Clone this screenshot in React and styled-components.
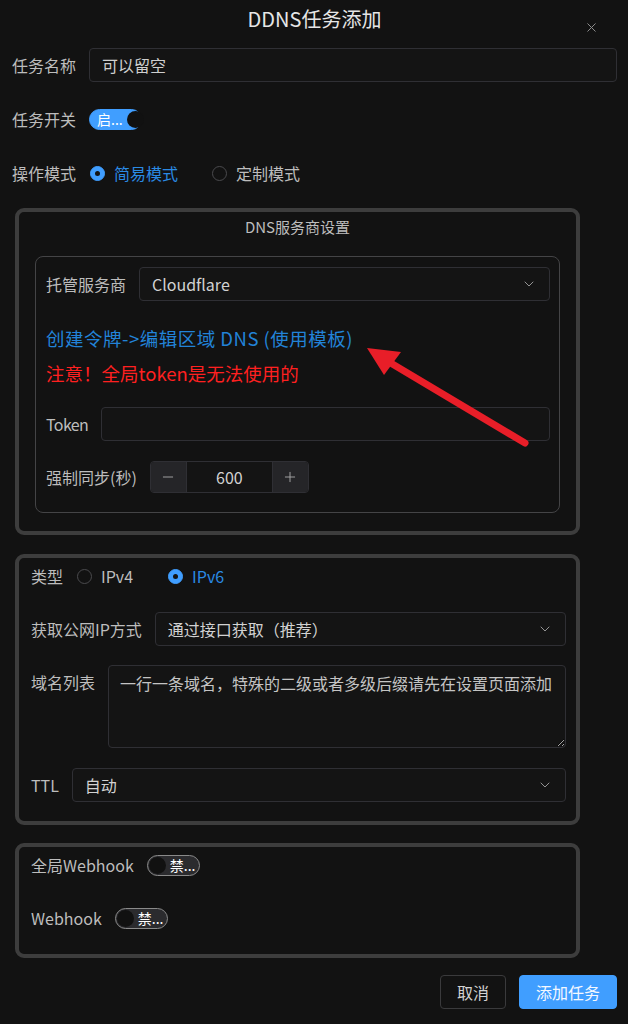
import React from 'react';
import styled, { createGlobalStyle } from 'styled-components';
import { X, ChevronDown, Minus, Plus } from 'lucide-react';

const colors = {
    bg: '#121212',
    field: '#141414',
    fieldBorder: '#2f2f34',
    box: '#3d3d3d',
    innerBox: '#444446',
    label: '#bdbdbd',
    text: '#d2d2d2',
    title: '#e6e6e6',
    primary: '#409eff',
    link: '#2283d8',
    danger: '#ff2020',
};

const GlobalStyle = createGlobalStyle`
    * { box-sizing: border-box; }
    html, body {
        margin: 0;
        background: ${colors.bg};
    }
    body {
        font-family: "Noto Sans CJK SC", "Noto Sans", sans-serif;
        color: ${colors.text};
    }
`;

const App = () => {
    return (
        <Dialog>
            <GlobalStyle />
            <Header>
                <Title>DDNS任务添加</Title>
                <CloseButton><X size={15} strokeWidth={1.6} /></CloseButton>
            </Header>

            <Row $mt={10}>
                <Label>任务名称</Label>
                <TextInput placeholder="可以留空" />
            </Row>
            <Row $mt={20}>
                <Label>任务开关</Label>
                <Switch on text="启..." />
            </Row>
            <Row $mt={20}>
                <Label>操作模式</Label>
                <RadioGroup $gap={33}>
                    <Radio checked label="简易模式" />
                    <Radio label="定制模式" />
                </RadioGroup>
            </Row>

            <Section $mt={18} $pad="0 16px 18px">
                <SectionTitle>DNS服务商设置</SectionTitle>
                <InnerBox>
                    <Row $mt={0}>
                        <Label>托管服务商</Label>
                        <Select value="Cloudflare" />
                    </Row>
                    <LinkText>创建令牌-&gt;编辑区域 DNS (使用模板)</LinkText>
                    <WarnText>注意！全局token是无法使用的</WarnText>
                    <Row $mt={21}>
                        <Label $narrow>Token</Label>
                        <TextInput />
                    </Row>
                    <Row $mt={20} $h={32}>
                        <Label>强制同步(秒)</Label>
                        <NumberBox>
                            <StepButton><Minus size={16} strokeWidth={1.4} /></StepButton>
                            <NumberValue>600</NumberValue>
                            <StepButton><Plus size={16} strokeWidth={1.4} /></StepButton>
                        </NumberBox>
                    </Row>
                </InnerBox>
            </Section>

            <Section $mt={19} $pad="6px 10px 19px 12px">
                <Row $mt={0} $h={24}>
                    <Label>类型</Label>
                    <RadioGroup $gap={34}>
                        <Radio label="IPv4" />
                        <Radio checked label="IPv6" />
                    </RadioGroup>
                </Row>
                <Row $mt={24}>
                    <Label>获取公网IP方式</Label>
                    <Select value="通过接口获取（推荐）" />
                </Row>
                <Row $mt={19} $top $h={83}>
                    <Label $lh={34}>域名列表</Label>
                    <TextArea placeholder="一行一条域名，特殊的二级或者多级后缀请先在设置页面添加" />
                </Row>
                <Row $mt={20}>
                    <Label>TTL</Label>
                    <Select value="自动" />
                </Row>
            </Section>

            <Section $mt={18} $pad="7px 10px 25px 12px">
                <Row $mt={0} $h={22}>
                    <Label>全局Webhook</Label>
                    <Switch text="禁..." />
                </Row>
                <Row $mt={31} $h={22}>
                    <Label>Webhook</Label>
                    <Switch text="禁..." />
                </Row>
            </Section>

            <Footer>
                <Button>取消</Button>
                <Button $primary>添加任务</Button>
            </Footer>

            <Arrow width="175" height="110" viewBox="0 0 175 110">
                <line x1="165" y1="103" x2="24" y2="19" stroke="#e81e28" strokeWidth="7" strokeLinecap="round" />
                <polygon points="7,8 41,12 24,35" fill="#e81e28" />
            </Arrow>
        </Dialog>
    );
};

const Switch = ({ on, text }) => (
    <Track $on={on}>
        {on && <SwitchText>{text}</SwitchText>}
        <Knob $on={on} />
        {!on && <SwitchText>{text}</SwitchText>}
    </Track>
);

const Radio = ({ checked, label }) => (
    <RadioItem $checked={checked}>
        <RadioDot $checked={checked} />
        <span>{label}</span>
    </RadioItem>
);

const Select = ({ value }) => (
    <SelectBox>
        <span>{value}</span>
        <ChevronDown size={16} strokeWidth={1.3} color="#a8a8a8" />
    </SelectBox>
);

export default App;

const Dialog = styled.div`
    position: relative;
    width: 628px;
    height: 1024px;
    padding: 0 11px 0 12px;
    overflow: hidden;
`;

const Header = styled.div`
    height: 38px;
    display: flex;
    align-items: center;
    justify-content: center;
`;

const Title = styled.div`
    font-size: 20px;
    line-height: 38px;
    color: ${colors.title};
`;

const CloseButton = styled.div`
    position: absolute;
    top: 20px;
    right: 29px;
    color: #8c8c8c;
    display: flex;
`;

const Row = styled.div`
    display: flex;
    align-items: ${p => p.$top ? 'flex-start' : 'center'};
    gap: 13px;
    margin-top: ${p => p.$mt}px;
    height: ${p => p.$h || 34}px;
`;

const Label = styled.div`
    font-size: 16px;
    line-height: ${p => p.$lh || 22}px;
    color: ${colors.label};
    white-space: nowrap;
    letter-spacing: ${p => p.$narrow ? '-0.6px' : '0'};
`;

const TextInput = styled.input`
    flex: 1;
    min-width: 0;
    height: 34px;
    background: ${colors.field};
    border: 1px solid ${colors.fieldBorder};
    border-radius: 4px;
    padding: 0 12px;
    font-family: inherit;
    font-size: 16px;
    color: ${colors.text};
    outline: none;

    &::placeholder {
        color: #cfcfcf;
    }
`;

const TextArea = styled.textarea`
    flex: 1;
    height: 83px;
    background: ${colors.field};
    border: 1px solid ${colors.fieldBorder};
    border-radius: 4px;
    padding: 5px 11px;
    font-family: inherit;
    font-size: 16px;
    line-height: 24px;
    color: ${colors.text};
    outline: none;
    resize: vertical;

    &::placeholder {
        color: #c4c4c4;
    }
`;

const SelectBox = styled.div`
    flex: 1;
    height: 34px;
    display: flex;
    align-items: center;
    justify-content: space-between;
    background: ${colors.field};
    border: 1px solid ${colors.fieldBorder};
    border-radius: 4px;
    padding: 0 12px 0 12px;
    font-size: 16px;
    color: ${colors.text};
`;

const Track = styled.div`
    width: 53px;
    height: 21px;
    border-radius: 11px;
    display: flex;
    align-items: center;
    padding: 0 1px 0 ${p => p.$on ? 7 : 1}px;
    gap: 4px;
    background: ${p => p.$on ? colors.primary : '#2b2b2e'};
    border: 1px solid ${p => p.$on ? colors.primary : '#8a8a8a'};
    justify-content: ${p => p.$on ? 'space-between' : 'flex-start'};
`;

const Knob = styled.div`
    width: 17px;
    height: 17px;
    border-radius: 50%;
    background: #111;
    flex: none;
`;

const SwitchText = styled.span`
    font-size: 14px;
    line-height: 19px;
    color: #fff;
    white-space: nowrap;
`;

const RadioGroup = styled.div`
    display: flex;
    align-items: center;
    gap: ${p => p.$gap}px;
`;

const RadioItem = styled.div`
    display: flex;
    align-items: center;
    gap: 9px;
    font-size: 16px;
    line-height: 22px;
    color: ${p => p.$checked ? '#2a8ae4' : colors.label};
`;

const RadioDot = styled.div`
    width: 15px;
    height: 15px;
    border-radius: 50%;
    margin-left: 1px;
    border: 1px solid ${p => p.$checked ? colors.primary : '#4a4a4d'};
    background: ${p => p.$checked ? colors.primary : 'transparent'};
    display: flex;
    align-items: center;
    justify-content: center;

    &::after {
        content: '';
        width: 5px;
        height: 5px;
        border-radius: 50%;
        background: ${p => p.$checked ? '#141414' : 'transparent'};
    }
`;

const Section = styled.div`
    width: 565px;
    margin: ${p => p.$mt}px 0 0 3px;
    border: 4px solid ${colors.box};
    border-radius: 9px;
    padding: ${p => p.$pad};
`;

const SectionTitle = styled.div`
    text-align: center;
    font-size: 15px;
    line-height: 30px;
    color: ${colors.label};
`;

const InnerBox = styled.div`
    margin-top: 14px;
    border: 1px solid ${colors.innerBox};
    border-radius: 8px;
    padding: 10px 9px 19px 10px;
`;

const LinkText = styled.div`
    margin-top: 24px;
    font-size: 18.5px;
    line-height: 26px;
    letter-spacing: 0.5px;
    color: ${colors.link};
`;

const WarnText = styled.div`
    margin-top: 9px;
    font-size: 18.5px;
    line-height: 26px;
    color: ${colors.danger};
`;

const NumberBox = styled.div`
    width: 159px;
    height: 32px;
    display: flex;
    border: 1px solid ${colors.fieldBorder};
    border-radius: 4px;
    overflow: hidden;
`;

const StepButton = styled.div`
    width: 35px;
    display: flex;
    align-items: center;
    justify-content: center;
    background: #252528;
    color: #a8a8a8;
`;

const NumberValue = styled.div`
    flex: 1;
    display: flex;
    align-items: center;
    justify-content: center;
    border-left: 1px solid ${colors.fieldBorder};
    border-right: 1px solid ${colors.fieldBorder};
    background: ${colors.field};
    font-size: 16px;
    color: ${colors.text};
`;

const Footer = styled.div`
    display: flex;
    justify-content: flex-end;
    gap: 13px;
    margin-top: 17px;
`;

const Button = styled.div`
    height: 34px;
    padding: 0 16px;
    display: flex;
    align-items: center;
    border-radius: 4px;
    font-size: 16px;
    border: 1px solid ${p => p.$primary ? colors.primary : '#3a3a3c'};
    background: ${p => p.$primary ? colors.primary : 'transparent'};
    color: ${p => p.$primary ? '#f4f8ff' : colors.text};
`;

const Arrow = styled.svg`
    position: absolute;
    left: 360px;
    top: 340px;
`;
